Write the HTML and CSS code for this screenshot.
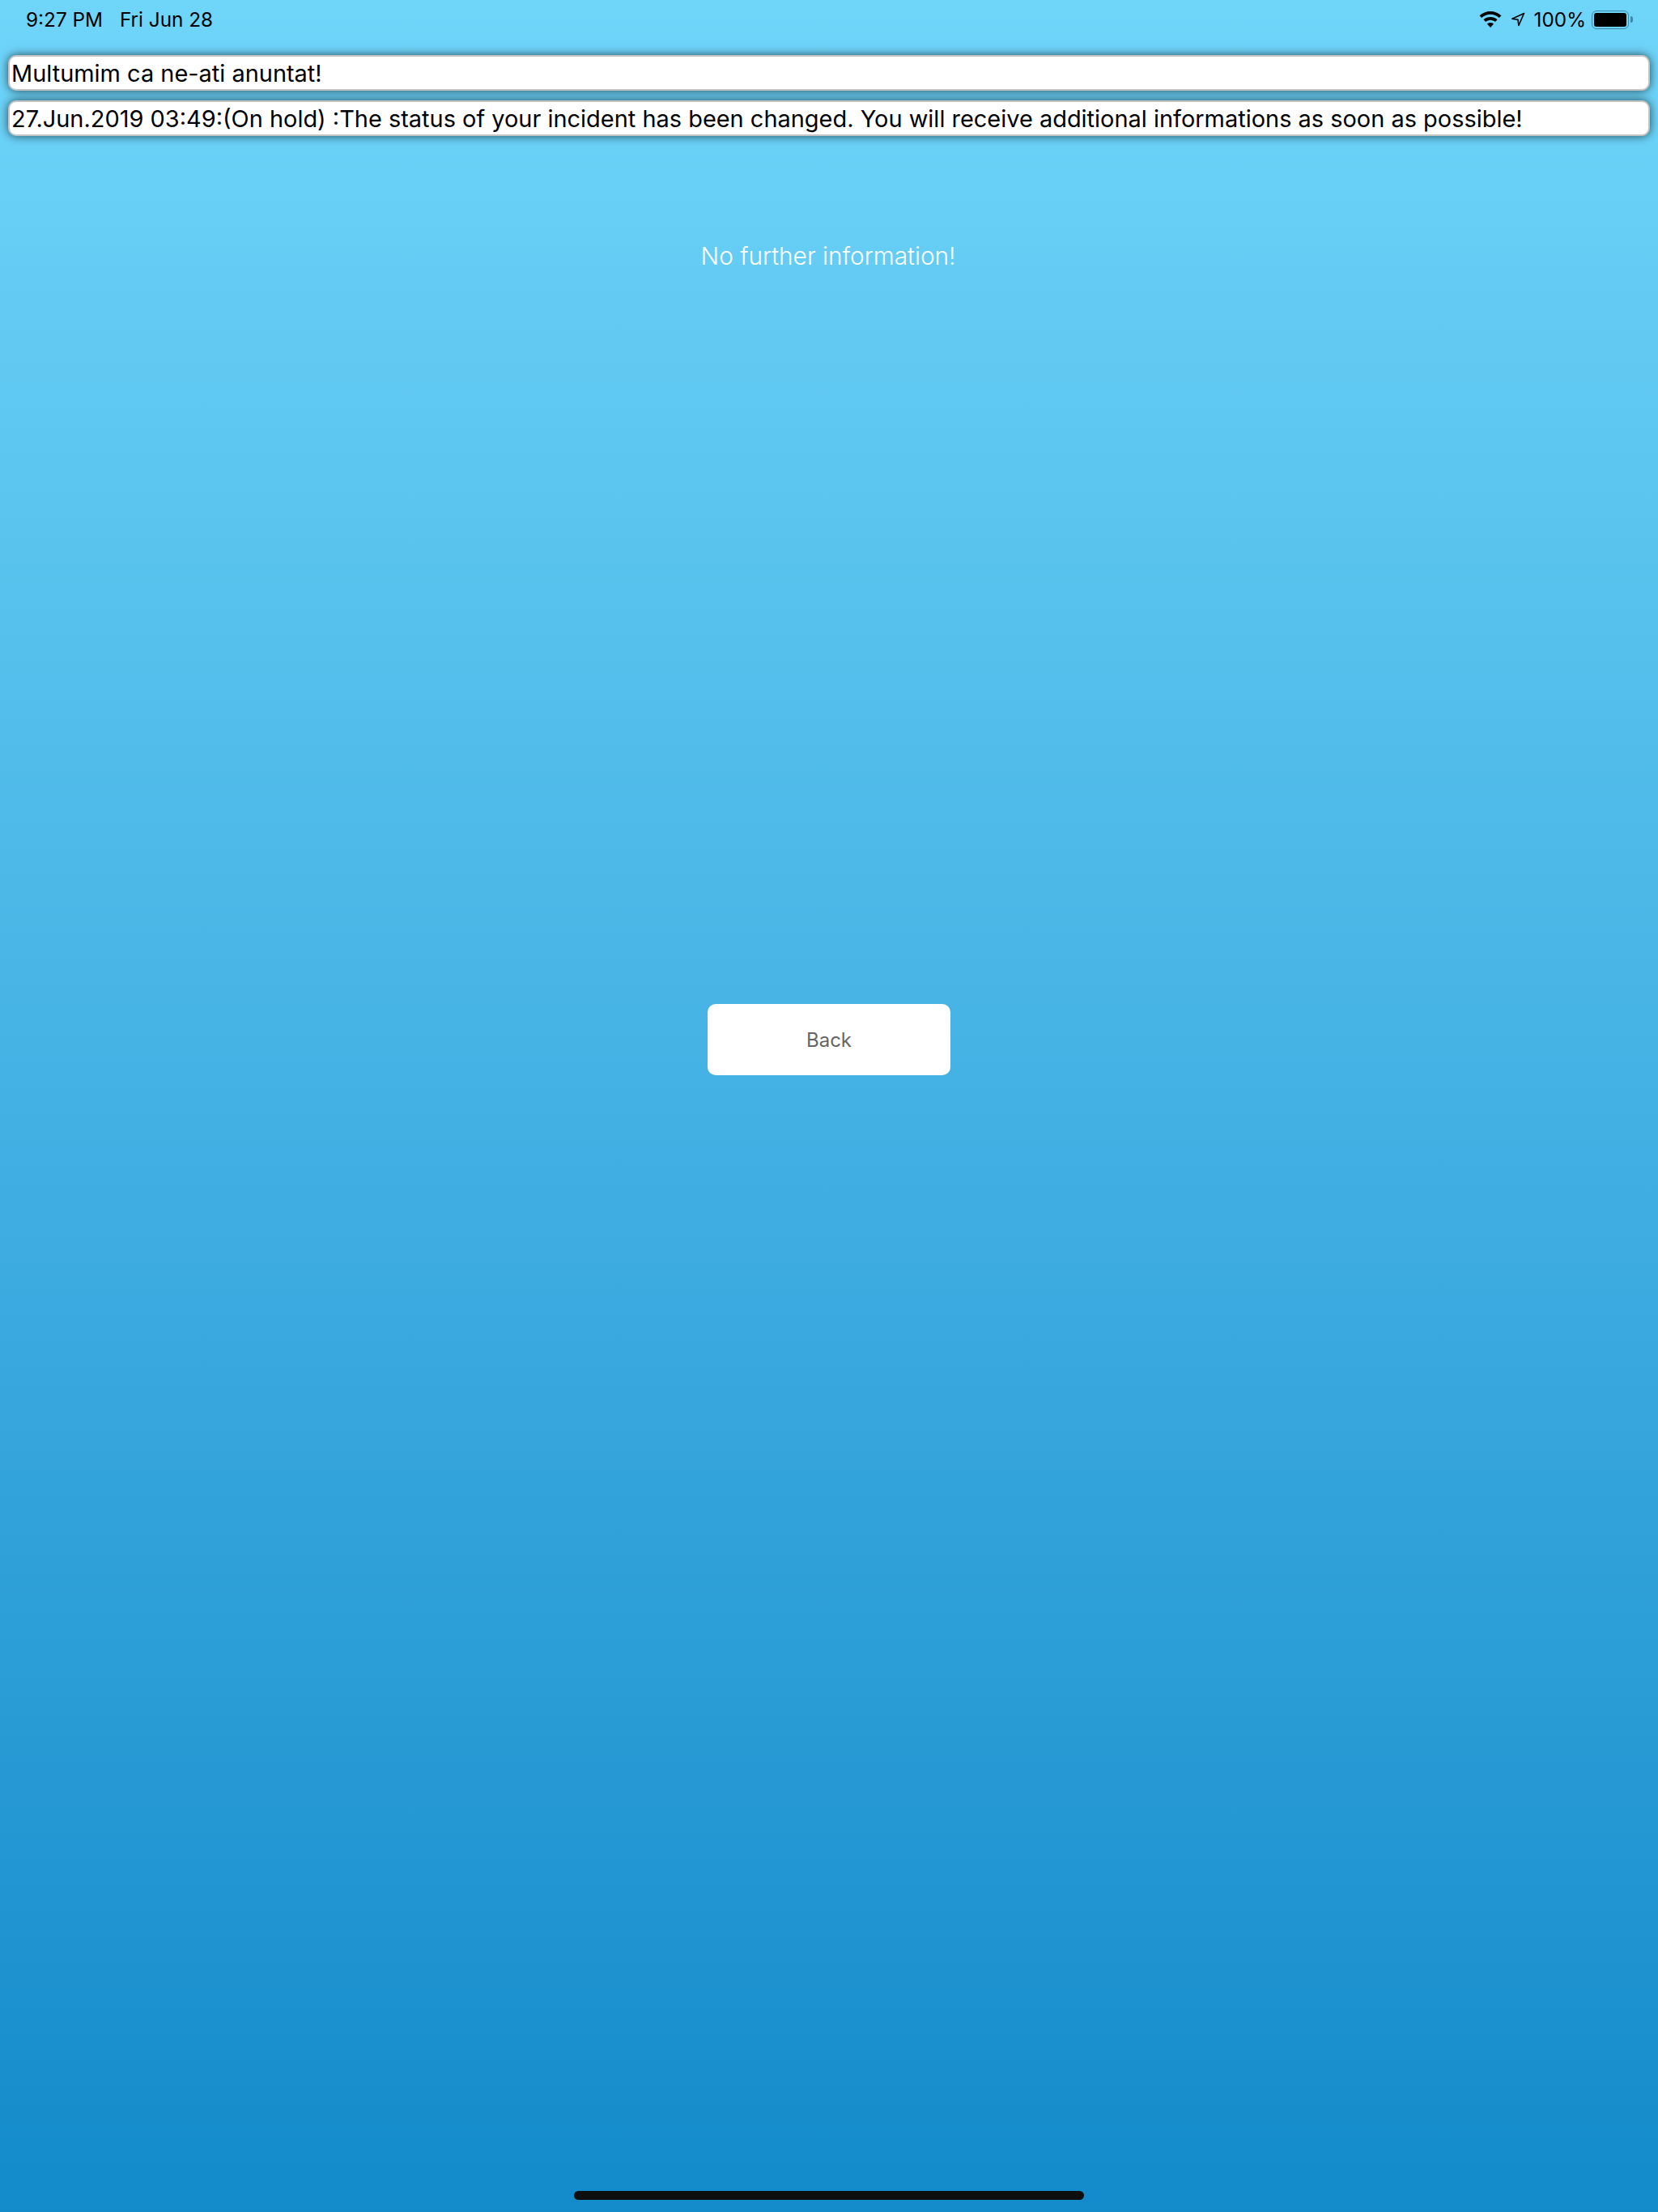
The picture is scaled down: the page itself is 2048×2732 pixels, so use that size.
FILE: index.html
```html
<!DOCTYPE html>
<html lang="en">

<head>
    <meta charset="UTF-8">
    <meta name="viewport" content="width=device-width, initial-scale=1.0">
    <title>Incident status</title>
    <link rel="stylesheet" href="styles.css">
</head>

<body>
    <div class="status-bar">
        <div class="status-left">
            <span>9:27 PM</span>
            <span>Fri Jun 28</span>
        </div>
        <div class="status-right">
            <svg class="icon-wifi" width="28" height="20" viewBox="0 0 28 20">
                <path d="M14 0C8.8 0 4.2 2 .6 5.3l2.5 2.8C6 5.400 9.800 3.800 14 3.800s8 1.600 10.900 4.300l2.500-2.800C23.800 2 19.200 0 14 0z" />
                <path d="M14 7c-3.300 0-6.200 1.200-8.500 3.200l2.600 2.900C9.700 11.700 11.800 10.800 14 10.800s4.300.9 5.900 2.300l2.600-2.900C20.200 8.200 17.300 7 14 7z" />
                <path d="M14 14c-1.600 0-3 .6-4.100 1.500L14 20l4.100-4.500C17 14.600 15.600 14 14 14z" />
            </svg>
            <svg class="icon-location" width="18" height="18" viewBox="0 0 18 18">
                <path d="M16.500 1.500 1.800 8.300 9 9.200l.9 7.200z" fill="none" stroke="#000" stroke-width="1.600" stroke-linejoin="round" />
            </svg>
            <span class="battery-text">100%</span>
            <div class="battery">
                <div class="battery-fill"></div>
            </div>
            <div class="battery-nub"></div>
        </div>
    </div>

    <div class="message-list">
        <div class="message">Multumim ca ne-ati anuntat!</div>
        <div class="message">27.Jun.2019 03:49:(On hold) :The status of your incident has been changed. You will receive additional informations as soon as possible!</div>
    </div>

    <p class="no-info">No further information!</p>

    <button type="button" class="back-button">Back</button>

    <div class="home-indicator"></div>
</body>

</html>
```

FILE: styles.css
```css
/* Incident Status Page Styles */

html,
body {
    height: 100%;
}

body {
    font-family: Inter, "Liberation Sans", sans-serif;
    margin: 0;
    padding: 0;
    height: 2732px;
    overflow: hidden;
    display: flex;
    flex-direction: column;
    background: linear-gradient(180deg, #6fd5f9 0%, #46b3e5 47%, #138aca 100%);
}

.status-bar {
    display: flex;
    justify-content: space-between;
    align-items: center;
    height: 48px;
    padding: 0 31px 0 32px;
    font-size: 24.300px;
    color: #000;
}

.status-left {
    display: flex;
    gap: 21px;
}

.status-right {
    display: flex;
    align-items: center;
}

.icon-wifi {
    margin-right: 11px;
}

.icon-location {
    margin-right: 11px;
}

.battery-text {
    margin-right: 7px;
}

.battery {
    box-sizing: border-box;
    width: 46px;
    height: 23px;
    padding: 2px;
    border: 1.500px solid #3f87a6;
    border-radius: 6px;
}

.battery-fill {
    height: 100%;
    background-color: #000;
    border-radius: 3px;
}

.battery-nub {
    width: 3px;
    height: 8px;
    margin-left: 2px;
    background-color: #3f87a6;
    border-radius: 0 3px 3px 0;
}

.message-list {
    display: flex;
    flex-direction: column;
    gap: 12px;
    margin: 20px 10px 0;
}

.message {
    box-sizing: border-box;
    height: 44px;
    line-height: 41px;
    padding: 0 2px;
    font-size: 28.950px;
    color: #000;
    background: #fff;
    border: 2px solid #c4c4c4;
    border-radius: 10px;
    box-shadow: 0 0 12px rgba(0, 0, 0, 0.65);
    white-space: nowrap;
    overflow: hidden;
}

.no-info {
    margin: 128px 2px 0 0;
    line-height: 40px;
    text-align: center;
    font-size: 29.800px;
    font-weight: 300;
    color: #fff;
}

.back-button {
    display: block;
    width: 300px;
    height: 88px;
    margin: 904px auto 0;
    padding-top: 2px;
    font-family: inherit;
    font-size: 24px;
    color: #666;
    background: #fff;
    border: none;
    border-radius: 10px;
}

.home-indicator {
    width: 630px;
    height: 11px;
    margin: auto auto 15px;
    background-color: #0e0e0e;
    border-radius: 6px;
}
```
